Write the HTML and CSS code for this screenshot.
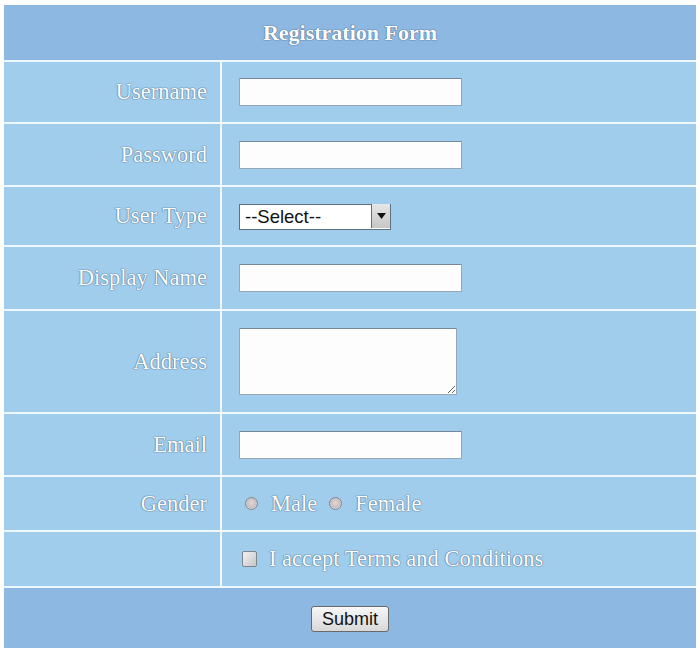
FILE: index.html
```html
<!DOCTYPE html>
<html>
<head>
<meta charset="utf-8">
<title>Registration Form</title>
<link rel="stylesheet" href="styles.css">
</head>
<body>
<form class="form">
  <div class="head">Registration Form</div>

  <div class="label r-user">Username</div>
  <div class="field"><input class="text" type="text"></div>

  <div class="label r-pass">Password</div>
  <div class="field"><input class="text" type="password"></div>

  <div class="label r-type">User Type</div>
  <div class="field">
    <span class="select-wrap">
      <select class="select"><option>--Select--</option></select>
      <span class="select-btn"><svg width="9" height="6" viewBox="0 0 9 6"><path d="M0 0h9L4.5 6z" fill="#111"/></svg></span>
    </span>
  </div>

  <div class="label r-disp">Display Name</div>
  <div class="field"><input class="text" type="text"></div>

  <div class="label r-addr">Address</div>
  <div class="field"><textarea class="area"></textarea></div>

  <div class="label r-mail">Email</div>
  <div class="field"><input class="text" type="text"></div>

  <div class="label r-gend">Gender</div>
  <div class="field choices">
    <label class="opt"><input class="radio" type="radio" name="g"><span>Male</span></label>
    <label class="opt"><input class="radio" type="radio" name="g"><span>Female</span></label>
  </div>

  <div class="label r-term"></div>
  <div class="field terms-cell">
    <label class="opt"><input class="check" type="checkbox"><span>I accept Terms and Conditions</span></label>
  </div>

  <div class="foot"><button class="submit" type="button">Submit</button></div>
</form>
</body>
</html>
```

FILE: styles.css
```css
html, body {
  margin: 0;
  padding: 0;
  background: #ffffff;
}

.form {
  margin: 5px 0 0 4px;
  width: 692px;
  display: grid;
  grid-template-columns: 216px 474px;
  grid-template-rows: 55px 60px 61px 58px 62px 101px 61px 53px 54px 60px;
  gap: 2px;
  background: #f1f8fc;
  font-family: "Liberation Serif", "Times New Roman", serif;
  font-size: 22.5px;
  color: #ffffff;
}

.head, .foot {
  grid-column: 1 / 3;
  background: #8db8e2;
  display: flex;
  align-items: center;
  justify-content: center;
}

.head {
  font-weight: bold;
  font-size: 22px;
  text-shadow: 0 0 1px #4c6f94, 0 0 1px #4c6f94, 0 0 1px #4c6f94;
}

.label {
  background: #a0cdec;
  display: flex;
  align-items: center;
  justify-content: flex-end;
  padding-right: 13px;
  text-shadow: 0 0 1px #4f7499, 0 0 1px #4f7499, 0 0 1px #4f7499;
}

.field {
  background: #a0cdec;
  display: flex;
  align-items: center;
  padding-left: 17px;
}

.text {
  box-sizing: border-box;
  width: 223px;
  height: 28px;
  margin: 0;
  background: #fdfdfd;
  border: 1px solid #97a6b6;
  border-top-color: #75889b;
  border-radius: 1px;
}

.select-wrap {
  position: relative;
  display: inline-block;
  width: 152px;
  height: 26px;
}

.select {
  -webkit-appearance: none;
  appearance: none;
  box-sizing: border-box;
  width: 152px;
  height: 26px;
  margin: 0;
  padding: 0 0 0 5px;
  background: #ffffff;
  border: 1px solid #5f7184;
  border-radius: 0;
  font-family: "Liberation Sans", Arial, sans-serif;
  font-size: 18.5px;
  color: #111111;
}

.select-btn {
  position: absolute;
  right: 1px;
  top: 1px;
  width: 19px;
  height: 24px;
  box-sizing: border-box;
  border-left: 1px solid #5f7184;
  background: linear-gradient(#e6e6e6, #c6c6c6);
  display: flex;
  align-items: center;
  justify-content: center;
  pointer-events: none;
}

.area {
  box-sizing: border-box;
  width: 218px;
  height: 67px;
  margin: 0;
  background: #fdfdfd;
  border: 1px solid #97a6b6;
  border-top-color: #75889b;
  border-radius: 1px;
}

.choices {
  padding-left: 23px;
}

.terms-cell {
  padding-left: 20px;
}

.opt {
  display: flex;
  align-items: center;
  text-shadow: 0 0 1px #4f7499, 0 0 1px #4f7499, 0 0 1px #4f7499;
  margin-right: 12px;
}

.radio {
  -webkit-appearance: none;
  appearance: none;
  box-sizing: border-box;
  width: 13px;
  height: 13px;
  margin: 0 13px 0 0;
  border-radius: 50%;
  border: 1px solid #80868e;
  background: radial-gradient(circle at 50% 45%, #e6d6d2 0%, #c8c0c2 55%, #f3f3f3 100%);
}

.check {
  -webkit-appearance: none;
  appearance: none;
  box-sizing: border-box;
  width: 15px;
  height: 16px;
  margin: 0 12px 0 0;
  border: 1px solid #7f858c;
  border-radius: 2px;
  background: linear-gradient(135deg, #f2f2f2, #c6c6c6);
}

.submit {
  box-sizing: border-box;
  width: 78px;
  height: 26px;
  margin: 2px 0 0 0;
  padding: 0;
  border: 1px solid #6a6a6a;
  border-radius: 3px;
  background: linear-gradient(#f7f7f7, #d8d8d8);
  font-family: "Liberation Sans", Arial, sans-serif;
  font-size: 18px;
  color: #111111;
}
```
